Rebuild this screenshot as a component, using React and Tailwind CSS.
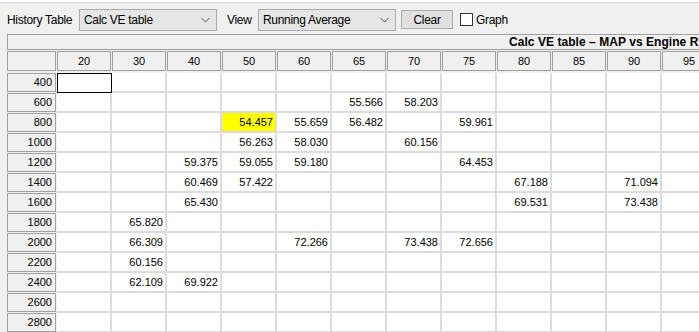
import React from 'react';

const cols = [20, 30, 40, 50, 60, 65, 70, 75, 80, 85, 90, 95];
const rows = [400, 600, 800, 1000, 1200, 1400, 1600, 1800, 2000, 2200, 2400, 2600, 2800];

// values keyed by "rpm-map"
const values = {
  '600-65': '55.566', '600-70': '58.203',
  '800-50': '54.457', '800-60': '55.659', '800-65': '56.482', '800-75': '59.961',
  '1000-50': '56.263', '1000-60': '58.030', '1000-70': '60.156',
  '1200-40': '59.375', '1200-50': '59.055', '1200-60': '59.180', '1200-75': '64.453',
  '1400-40': '60.469', '1400-50': '57.422', '1400-80': '67.188', '1400-90': '71.094',
  '1600-40': '65.430', '1600-80': '69.531', '1600-90': '73.438',
  '1800-30': '65.820',
  '2000-30': '66.309', '2000-60': '72.266', '2000-70': '73.438', '2000-75': '72.656',
  '2200-30': '60.156',
  '2400-30': '62.109', '2400-40': '69.922',
};

function Chevron() {
  return (
    <svg width="9" height="6" viewBox="0 0 9 6" className="shrink-0">
      <path d="M0.5 1 L4.5 5 L8.5 1" fill="none" stroke="#505050" strokeWidth="1" />
    </svg>
  );
}

function Combo({ label }) {
  return (
    <div className="flex items-center justify-between w-[138px] h-[22px] shrink-0 border border-[#adadad] bg-[#e5e5e5] pl-[4px] pr-[6px] text-black">
      <span>{label}</span>
      <Chevron />
    </div>
  );
}

export default function App() {
  return (
    <div className="w-[699px] h-[332px] overflow-hidden bg-[#f0f0f0] font-['Liberation_Sans',Arial,sans-serif] text-black">
      <div className="h-[2px] bg-white" />
      <div className="h-px bg-[#d8d8d8]" />

      {/* toolbar */}
      <div className="flex items-center h-[31px] pt-[2px] pl-[7px] text-[12px] tracking-[-0.3px]">
        <span className="w-[72px] shrink-0">History Table</span>
        <Combo label="Calc VE table" />
        <span className="ml-[10px] w-[31px] shrink-0">View</span>
        <Combo label="Running Average" />
        <div className="ml-[5px] w-[52px] h-[19px] shrink-0 border border-[#adadad] bg-[#e1e1e1] flex items-center justify-center">
          Clear
        </div>
        <div className="ml-[7px] w-[13px] h-[13px] shrink-0 border border-[#333333] bg-white" />
        <span className="ml-[3px]">Graph</span>
      </div>

      {/* table panel */}
      <div className="ml-[7px] w-[760px]">
        <div className="h-[16px] border border-[#a0a0a0] bg-[#f0f0f0] pl-[501px] whitespace-nowrap text-[12px] tracking-[0.05px] font-bold leading-[14px]">
          Calc VE table – MAP vs Engine RPM
        </div>

        <div className="mt-px flex h-[22px]">
          <div className="w-[49px] h-[20px] mr-px shrink-0 border border-[#a0a0a0] bg-[#f0f0f0]" />
          {cols.map((c) => (
            <div
              key={c}
              className="w-[54px] h-[20px] mr-px shrink-0 border border-[#a0a0a0] bg-[#f0f0f0] text-[11px] leading-[18px] text-center"
            >
              {c}
            </div>
          ))}
        </div>

        {rows.map((r) => (
          <div key={r} className="flex h-[20px]">
            <div className="w-[49px] h-[19px] mr-px shrink-0 border border-[#a0a0a0] bg-[#f0f0f0] text-[11px] leading-[17px] text-right pr-[3px]">
              {r}
            </div>
            {cols.map((c) => {
              const v = values[`${r}-${c}`];
              if (r === 400 && c === 20) {
                return <div key={c} className="w-[55px] h-[20px] shrink-0 border border-black bg-white" />;
              }
              const hi = r === 800 && c === 50;
              return (
                <div
                  key={c}
                  className={`w-[55px] h-[20px] shrink-0 border-r-2 border-b-2 border-[#dcdcdc] text-[11px] leading-[18px] text-right pr-[2px] ${hi ? 'bg-[#ffff00]' : 'bg-white'}`}
                >
                  {v}
                </div>
              );
            })}
          </div>
        ))}
      </div>
    </div>
  );
}
